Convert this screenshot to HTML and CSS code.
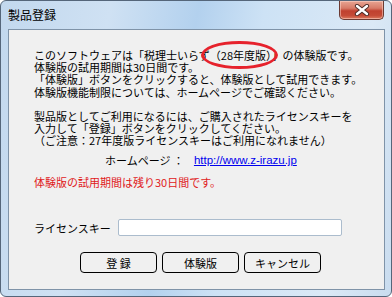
FILE: index.html
```html
<!DOCTYPE html>
<html lang="ja">
<head>
  <meta charset="UTF-8">
  <meta name="viewport" content="width=device-width, initial-scale=1.0">
  <title>製品登録</title>
  <link rel="stylesheet" href="styles.css">
</head>
<body>
  <div class="window">
    <!-- タイトルバー -->
    <div class="titlebar">
      <span class="title">製品登録</span>
      <div class="close-btn">
        <svg width="16" height="12" viewBox="0 0 16 12">
          <path d="M3 2 L13 10 M13 2 L3 10" stroke="#4a2a25" stroke-width="4.2" stroke-linecap="round"/>
          <path d="M3 2 L13 10 M13 2 L3 10" stroke="#ffffff" stroke-width="2.4" stroke-linecap="round"/>
        </svg>
      </div>
    </div>

    <!-- 本文 -->
    <div class="client">
      <div class="message">
        <p>このソフトウェアは「税理士いらず<span class="mark">（28年度版）</span>」の体験版です。<br>
        体験版の試用期間は30日間です。<br>
        「体験版」ボタンをクリックすると、体験版として試用できます。<br>
        体験版機能制限については、ホームページでご確認ください。</p>
        <p>製品版としてご利用になるには、ご購入されたライセンスキーを<br>
        入力して「登録」ボタンをクリックしてください。<br>
        （ご注意：27年度版ライセンスキーはご利用になれません）</p>
      </div>

      <div class="homepage">
        <span>ホームページ ：</span>
        <a href="#">http://www.z-irazu.jp</a>
      </div>

      <div class="remaining">体験版の試用期間は残り30日間です。</div>

      <div class="license-row">
        <label for="license-key">ライセンスキー</label>
        <input type="text" id="license-key">
      </div>

      <div class="buttons">
        <button class="btn">登 録</button>
        <button class="btn">体験版</button>
        <button class="btn">キャンセル</button>
      </div>
    </div>
  </div>
</body>
</html>
```

FILE: styles.css
```css
body {
  margin: 0;
  padding: 0;
  font-family: "Noto Sans CJK JP", "Liberation Sans", sans-serif;
  background-color: #ffffff;
}

.window {
  width: 392px;
  height: 297px;
  box-sizing: border-box;
  display: flex;
  flex-direction: column;
  padding: 0 6px 6px 7px;
  border: 1px solid #55667a;
  border-radius: 6px;
  background: linear-gradient(100deg, #c2d8ee 0%, #cfe1f3 25%, #b3d1ee 45%, #cde2f5 60%, #dbe9f6 85%, #c9dcef 100%);
}

.titlebar {
  height: 28px;
  display: flex;
  justify-content: space-between;
  align-items: flex-start;
}

.title {
  font-size: 12px;
  line-height: 12px;
  margin-top: 8px;
  color: #000;
}

.close-btn {
  width: 43px;
  height: 18px;
  margin-right: 1px;
  display: flex;
  align-items: center;
  justify-content: center;
  border: 1px solid #6b3a32;
  border-top: none;
  border-radius: 0 0 5px 5px;
  background: linear-gradient(#e8a593 0%, #d77b68 40%, #c0412f 55%, #c44a36 80%, #dc7a5e 100%);
  box-shadow: inset 0 0 0 1px rgba(255, 220, 210, 0.5);
}

.client {
  flex: 1;
  border: 1px solid #7f93a8;
  background-color: #f0f0f0;
  display: flex;
  flex-direction: column;
  padding: 19px 0 0 25px;
}

.message p {
  margin: 0 0 12px 0;
  font-size: 11px;
  line-height: 12.2px;
  color: #000;
}

.message p:last-child {
  margin-bottom: 0;
}

.mark {
  position: relative;
}

.mark::after {
  content: "";
  position: absolute;
  left: -9px;
  right: -6px;
  top: -6px;
  bottom: -6px;
  border: 3px solid #e6222c;
  border-radius: 50%;
}

.homepage {
  margin: 8px 0 0 71px;
  display: flex;
  align-items: center;
  gap: 10px;
  font-size: 11px;
  line-height: 12px;
}

.homepage a {
  font-family: "Liberation Sans", sans-serif;
  font-size: 11.5px;
  color: #0000ee;
  text-decoration: underline;
}

.remaining {
  margin-top: 10px;
  font-size: 11px;
  line-height: 12px;
  color: #e0201c;
}

.license-row {
  margin-top: 31px;
  display: flex;
  align-items: center;
}

.license-row label {
  font-size: 11px;
  width: 84px;
}

.license-row input {
  width: 224px;
  height: 17px;
  box-sizing: border-box;
  border: 1px solid #abbccd;
  border-radius: 2px;
  background: #fff;
  padding: 0 3px;
}

.buttons {
  margin: 16px 0 0 46px;
  display: flex;
  gap: 5px;
}

.btn {
  width: 77px;
  height: 21px;
  box-sizing: border-box;
  border: 1px solid #000;
  border-radius: 4px;
  background-color: #f0f0f0;
  font-family: "Noto Sans CJK JP", sans-serif;
  font-size: 11px;
  padding: 0;
  color: #000;
}
```
